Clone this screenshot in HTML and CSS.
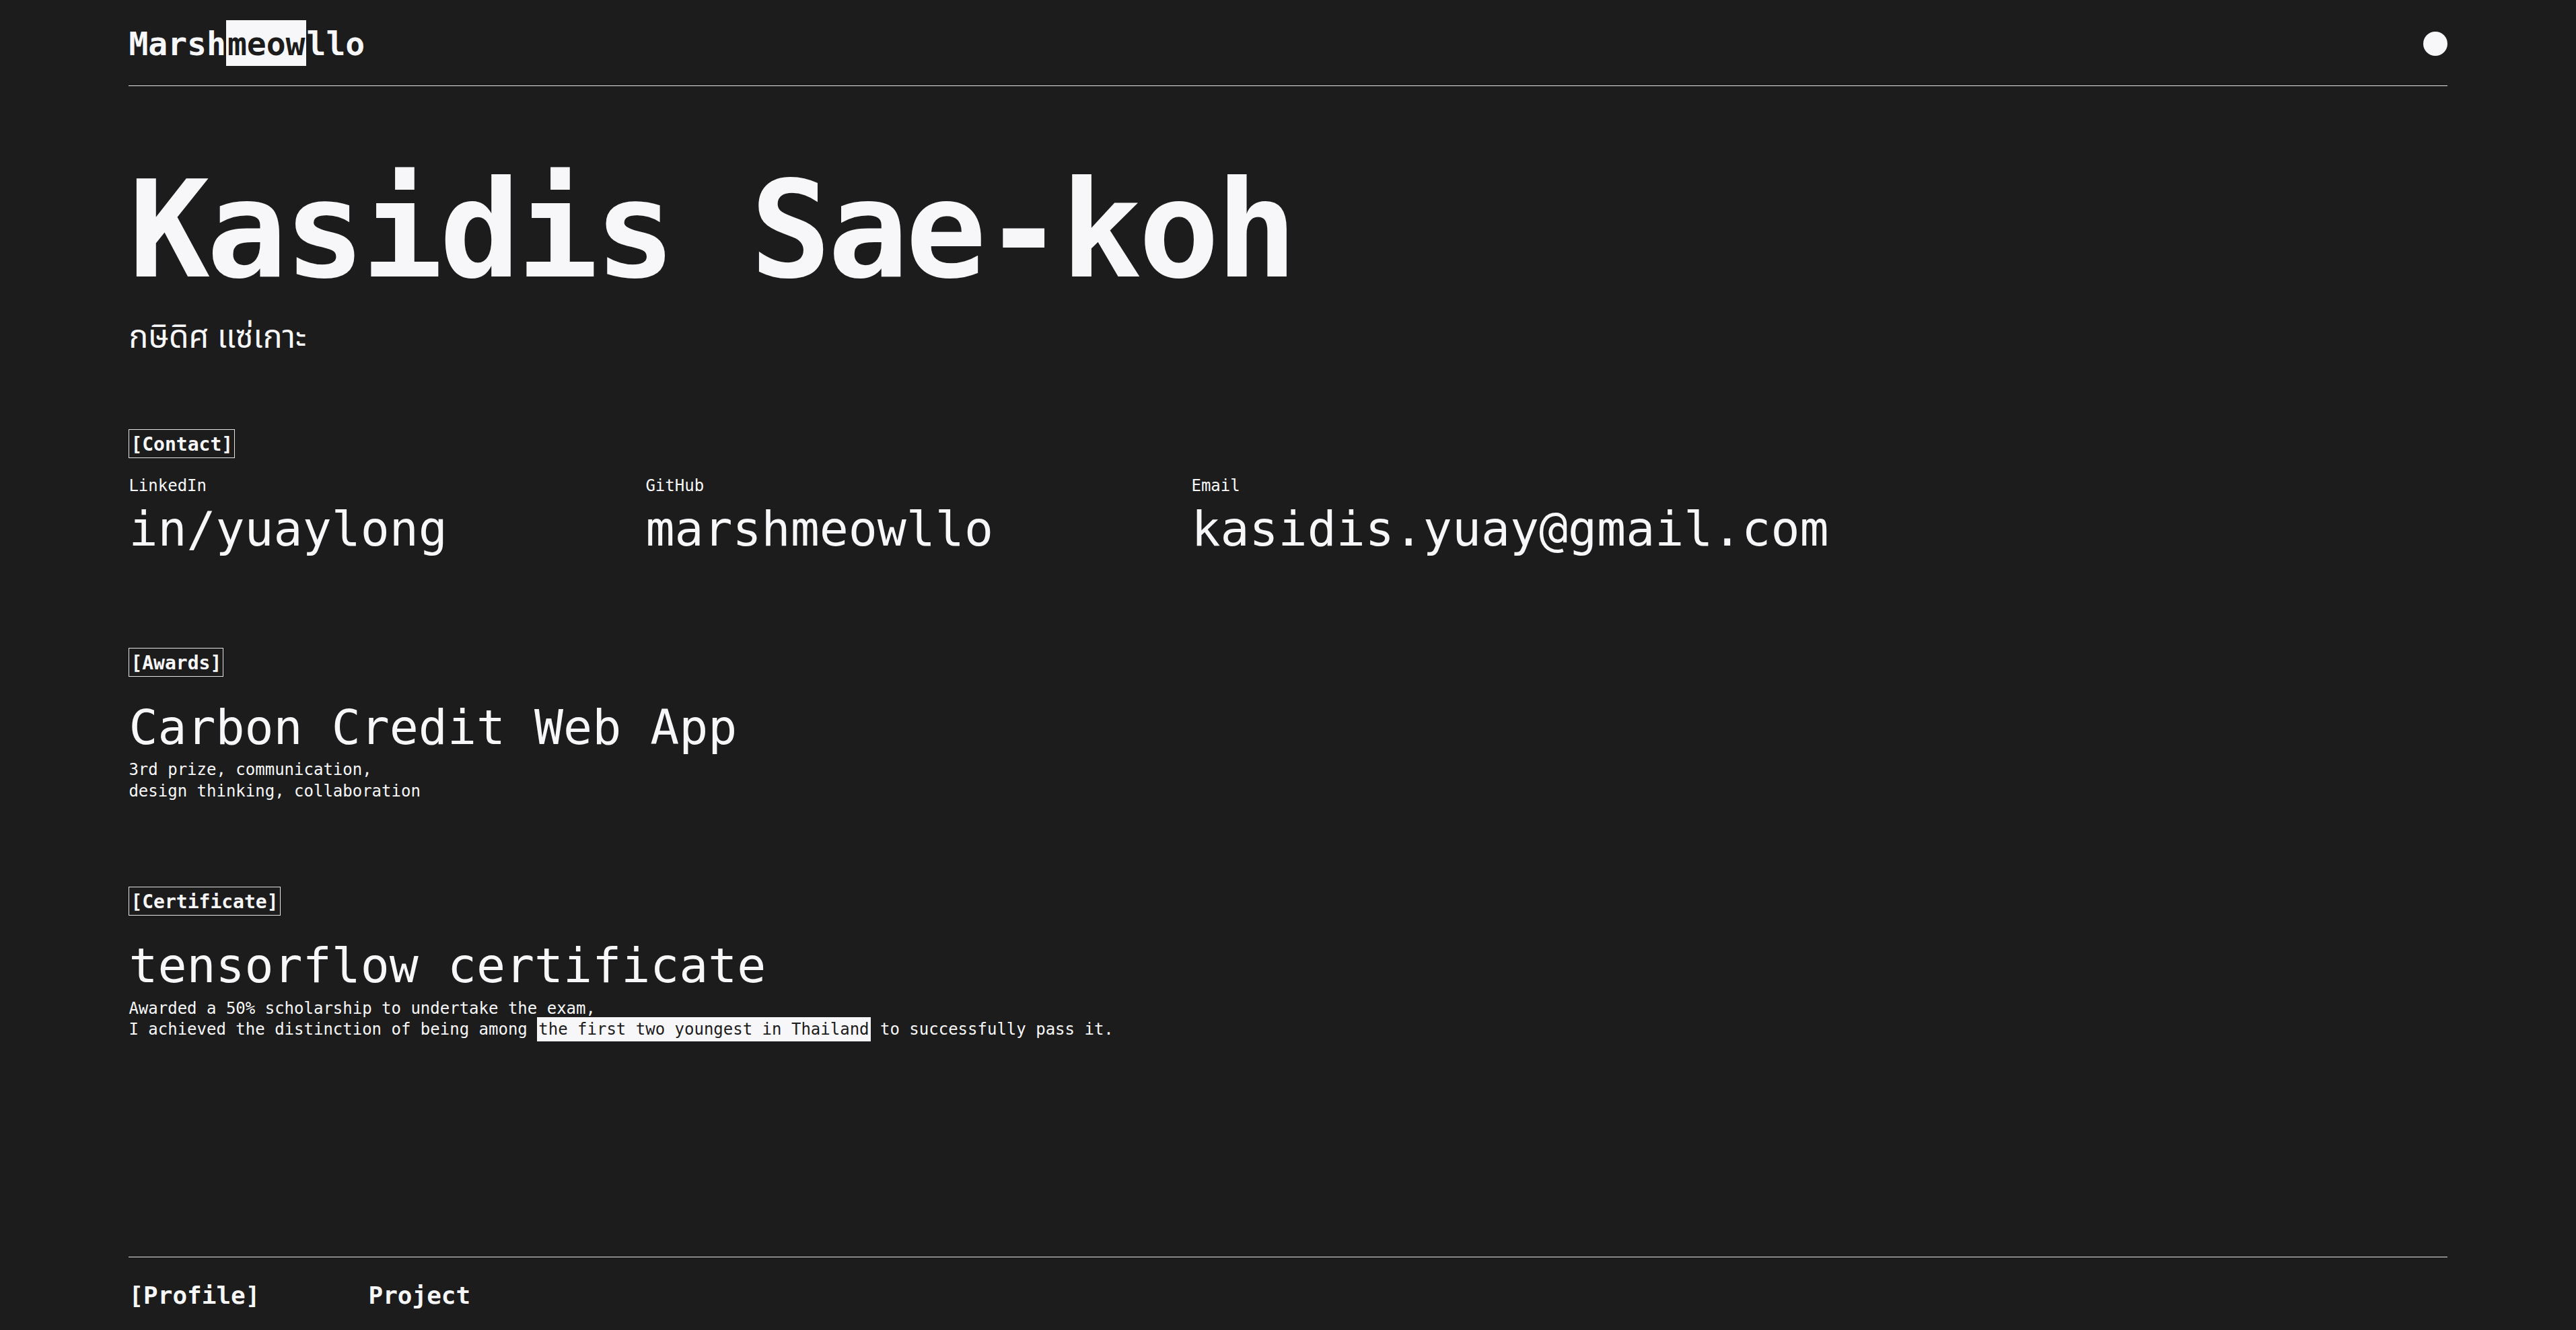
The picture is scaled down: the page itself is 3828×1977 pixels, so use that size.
FILE: index.html
```html
<!DOCTYPE html>
<html lang="en">
<head>
<meta charset="utf-8">
<title>Marshmeowllo — Kasidis Sae-koh</title>
<link rel="stylesheet" href="styles.css">
</head>
<body>
<div class="page">
  <header class="topbar">
    <div class="logo">Marsh<span class="logo-mark">meow</span>llo</div>
    <span class="dot"></span>
  </header>

  <main class="content">
    <section class="hero">
      <h1 class="name">Kasidis Sae-koh</h1>
      <p class="name-th">กษิดิศ แซ่เกาะ</p>
    </section>

    <section class="block block-contact">
      <h2 class="tag">[Contact]</h2>
      <div class="contact-list">
        <div class="contact-item">
          <span class="label">LinkedIn</span>
          <span class="value">in/yuaylong</span>
        </div>
        <div class="contact-item">
          <span class="label">GitHub</span>
          <span class="value">marshmeowllo</span>
        </div>
        <div class="contact-item">
          <span class="label">Email</span>
          <span class="value">kasidis.yuay@gmail.com</span>
        </div>
      </div>
    </section>

    <section class="block block-awards">
      <h2 class="tag">[Awards]</h2>
      <h3 class="title">Carbon Credit Web App</h3>
      <p class="desc">3rd prize, communication,<br>design thinking, collaboration</p>
    </section>

    <section class="block block-cert">
      <h2 class="tag">[Certificate]</h2>
      <h3 class="title">tensorflow certificate</h3>
      <p class="desc desc-tight">Awarded a 50% scholarship to undertake the exam,<br>I achieved the distinction of being among <mark class="hl">the first two youngest in Thailand</mark> to successfully pass it.</p>
    </section>
  </main>

  <footer class="bottombar">
    <nav class="nav">
      <a class="nav-link" href="#">[Profile]</a>
      <a class="nav-link" href="#">Project</a>
    </nav>
  </footer>
</div>
</body>
</html>
```
FILE: styles.css
```css
* {
  box-sizing: border-box;
}

html,
body {
  margin: 0;
  padding: 0;
  background: #1c1c1c;
}

body {
  color: #f7f7f9;
  font-family: "DejaVu Sans Mono", "Liberation Mono", monospace;
}

.page {
  min-height: 100vh;
  display: flex;
  flex-direction: column;
  padding: 0 5%;
}

/* header */
.topbar {
  display: flex;
  align-items: center;
  justify-content: space-between;
  padding: 31px 0 28px;
  border-bottom: 1px solid #e4e4e7;
}

.logo {
  font-size: 48px;
  font-weight: 700;
  line-height: 68px;
}

.logo-mark {
  background: #f7f7f9;
  color: #1c1c1c;
  padding: 7px 2px 5px;
}

.dot {
  width: 36px;
  height: 36px;
  border-radius: 50%;
  background: #f7f7f9;
}

/* hero */
.content {
  display: flex;
  flex-direction: column;
}

.name {
  margin: 114px 0 0;
  font-size: 200px;
  line-height: 200px;
  font-weight: 700;
  letter-spacing: -0.025em;
}

.name-th {
  margin: 31px 0 0;
  font-family: "Noto Sans Thai", "Noto Sans Thai UI", "Noto Sans", sans-serif;
  font-size: 48px;
  line-height: 60px;
  font-weight: 400;
}

/* sections */
.block-contact {
  margin-top: 105px;
}

.block-awards {
  margin-top: 134px;
}

.block-cert {
  margin-top: 126px;
}

.tag {
  width: fit-content;
  margin: 0;
  padding: 2px 2px 0;
  border: 1px solid #e4e4e7;
  font-size: 28px;
  line-height: 39px;
  font-weight: 700;
}

.contact-list {
  display: flex;
  gap: 294.5px;
  margin-top: 26px;
}

.contact-item {
  display: flex;
  flex-direction: column;
  gap: 6px;
}

.label {
  font-size: 24px;
  line-height: 31px;
}

.value {
  font-size: 71.5px;
  line-height: 85px;
}

.title {
  margin: 33px 0 0;
  font-size: 71.5px;
  line-height: 85px;
  font-weight: 400;
}

.block-cert .title {
  margin-top: 32px;
}

.desc {
  margin: 4px 0 0;
  font-size: 24px;
  line-height: 32px;
}

.desc-tight {
  margin-top: 6px;
  line-height: 31px;
}

.hl {
  background: #f7f7f9;
  color: #1c1c1c;
  padding: 4px 2px;
}

/* footer */
.bottombar {
  margin-top: auto;
  border-top: 1px solid #e4e4e7;
  padding: 36px 0 31px;
}

.nav {
  display: flex;
  gap: 161px;
}

.nav-link {
  color: #f7f7f9;
  text-decoration: none;
  font-size: 36px;
  line-height: 41px;
  font-weight: 700;
}
```
